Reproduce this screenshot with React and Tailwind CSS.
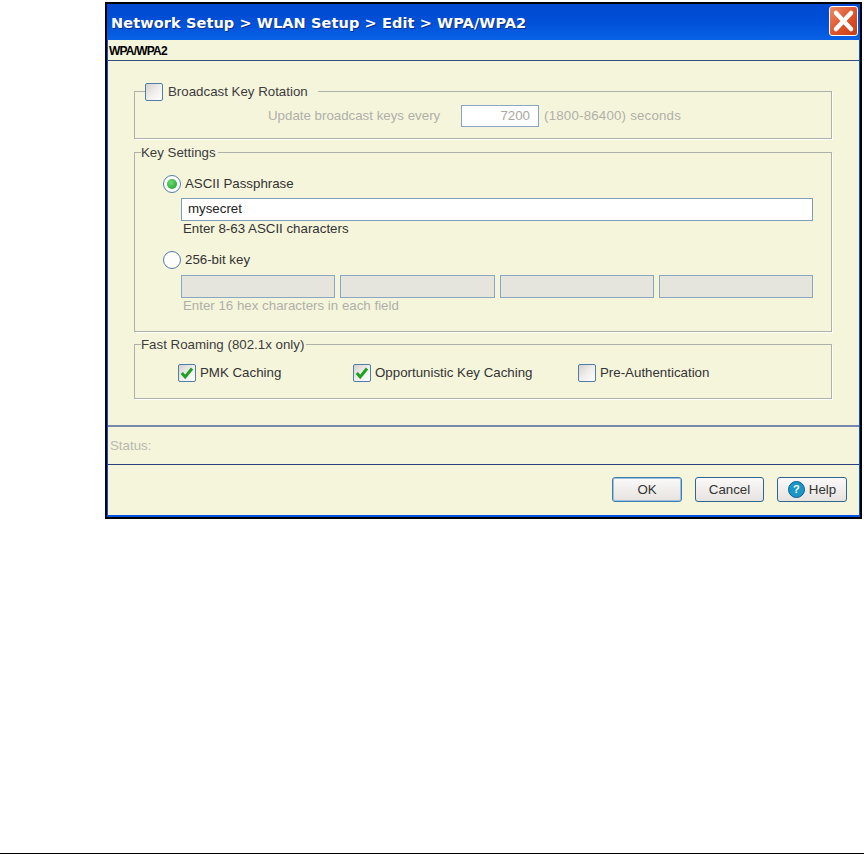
import React from 'react';

const Check = ({ checked }) => (
  <span className="relative block w-[18px] h-[18px] border border-[#4f7ea6] rounded-[2px] bg-gradient-to-br from-[#d4d0cc] via-[#f0eeec] to-white shrink-0">
    {checked && (
      <svg viewBox="0 0 16 16" className="absolute left-0 top-0 w-[16px] h-[16px]">
        <path d="M2.8 8l3.4 4L13 3.5" fill="none" stroke="#21a121" strokeWidth="3" />
      </svg>
    )}
  </span>
);

const Radio = ({ selected }) => (
  <span className="flex items-center justify-center w-[18px] h-[18px] rounded-full border-[1.5px] border-[#4f7ea6] bg-white shrink-0">
    {selected && <span className="block w-[10px] h-[10px] rounded-full bg-[radial-gradient(circle_at_40%_35%,#6fdc6f,#159a2c)]" />}
  </span>
);

const Panel = ({ legend, className, children }) => (
  <div className={`relative border border-[#aeb1a9] shadow-[1px_1px_0_#fff] ${className}`}>
    {legend && <div className="absolute left-[6px] top-[-9px] bg-[#f5f5dc] pr-[2px] text-[#3c3c3c] leading-[18px]">{legend}</div>}
    {children}
  </div>
);

const Button = ({ className, children }) => (
  <button className={`flex items-center justify-center h-[25px] rounded-[3px] border border-[#2f6690] bg-gradient-to-b from-[#fbfaf8] to-[#e6e2e0] text-[#333] ${className}`}>
    {children}
  </button>
);

const KeyField = () => <div className="flex-1 h-[23px] border border-[#8aa6c0] bg-[#e6e5dd]" />;

export default function App() {
  return (
    <div className="w-[864px] h-[854px] bg-white flex flex-col font-['Liberation_Sans',Arial,sans-serif] text-[13.3px] overflow-hidden">
      <div className="ml-[105px] mt-[2px] w-[757px] h-[517px] border-2 border-black bg-[#0054e3] flex flex-col">
        {/* title bar */}
        <div className="h-[36px] shrink-0 flex justify-between pl-[4px] pr-[2px] bg-gradient-to-b from-[#0049d0] via-[#0050d8] to-[#0a62e6]">
          <span className="mt-[9px] text-white font-['DejaVu_Sans',sans-serif] font-bold text-[14.5px] leading-[20px] tracking-[0.1px] [text-shadow:1px_1px_0_#0a2f8c]">
            Network Setup &gt; WLAN Setup &gt; Edit &gt; WPA/WPA2
          </span>
          <span className="mt-[2px] flex items-center justify-center w-[29px] h-[30px] rounded-[3px] border border-white bg-gradient-to-br from-[#ec8a66] via-[#e0562c] to-[#c63c12]">
            <svg viewBox="0 0 27 28" className="w-[27px] h-[28px]">
              <path d="M6 6l15 16M21 6L6 22" stroke="#fff" strokeWidth="4.5" strokeLinecap="round" />
            </svg>
          </span>
        </div>

        <div className="flex-1 mx-[1px] mb-[2px] bg-[#f5f5dc] flex flex-col">
          <div className="h-[19px] shrink-0 border-b border-[#34507c] flex items-center pl-[1px] font-bold text-[12px] tracking-[-0.8px] text-black mt-[2px]">WPA/WPA2</div>

          <div className="flex-1 flex flex-col px-[26px] pt-[30px] w-[750px]">
            <Panel className="h-[48px] shrink-0">
              <div className="absolute left-[10px] top-[-10px] bg-[#f5f5dc] pr-[10px] flex items-center gap-[5px] text-[#3c3c3c]">
                <Check />
                <span>Broadcast Key Rotation</span>
              </div>
              <div className="flex items-center pl-[133px] pt-[13px] text-[#b0b0a8]">
                <span className="w-[193px]">Update broadcast keys every</span>
                <span className="w-[78px] h-[22px] bg-white border border-[#8aa6c0] flex items-center justify-end pr-[8px] text-[#a8a8a0]">7200</span>
                <span className="ml-[5px] tracking-[0.2px]">(1800-86400) seconds</span>
              </div>
            </Panel>

            <Panel legend="Key Settings" className="h-[180px] shrink-0 mt-[13px]">
              <div className="flex flex-col pl-[28px] pr-[18px] pt-[21px] text-[#333]">
                <div className="flex items-center gap-[4px]">
                  <Radio selected />
                  <span>ASCII Passphrase</span>
                </div>
                <div className="ml-[18px] mt-[4px] h-[23px] border border-[#7f9db9] bg-white flex items-center pl-[6px] text-[#222]">mysecret</div>
                <div className="ml-[20px] mt-[1px] leading-[14px]">Enter 8-63 ASCII characters</div>
                <div className="flex items-center gap-[4px] mt-[14px]">
                  <Radio />
                  <span>256-bit key</span>
                </div>
                <div className="ml-[18px] mt-[5px] flex gap-[5px]">
                  <KeyField /><KeyField /><KeyField /><KeyField />
                </div>
                <div className="ml-[20px] mt-[1px] leading-[14px] text-[#b0b0a8]">Enter 16 hex characters in each field</div>
              </div>
            </Panel>

            <Panel legend="Fast Roaming (802.1x only)" className="h-[55px] shrink-0 mt-[12px]">
              <div className="flex items-center pl-[43px] pt-[18px] text-[#333]">
                <div className="flex items-center gap-[4px] w-[175px]"><Check checked /><span>PMK Caching</span></div>
                <div className="flex items-center gap-[4px] w-[225px]"><Check checked /><span>Opportunistic Key Caching</span></div>
                <div className="flex items-center gap-[4px]"><Check /><span>Pre-Authentication</span></div>
              </div>
            </Panel>
          </div>

          <div className="h-[40px] shrink-0 border-t-2 border-[#7688ab] border-b border-b-[#2a3f7c] flex items-center text-[#b8b8ae] pl-[2px] pt-[1px]">Status:</div>

          <div className="h-[50px] shrink-0 flex justify-end items-start gap-[13px] pt-[12px] pr-[12px]">
            <Button className="w-[70px] border-[#3c7fb1] shadow-[inset_0_0_0_1px_#9cc0e0]">OK</Button>
            <Button className="w-[69px]">Cancel</Button>
            <Button className="w-[70px] gap-[4px]">
              <span className="flex items-center justify-center w-[17px] h-[17px] rounded-full bg-[#1b96c8] border border-[#0d5f8c] text-white font-bold text-[11px]">?</span>
              Help
            </Button>
          </div>
        </div>
      </div>
      <div className="mt-auto h-[1px] bg-black" />
    </div>
  );
}
